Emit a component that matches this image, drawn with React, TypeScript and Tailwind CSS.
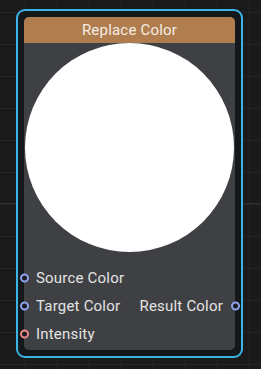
import * as React from 'react';

type Port = { label: string; tone: 'blue' | 'red' };

const inputs: Port[] = [
  { label: 'Source Color', tone: 'blue' },
  { label: 'Target Color', tone: 'blue' },
  { label: 'Intensity', tone: 'red' },
];

function Dot({ tone, side }: { tone: 'blue' | 'red'; side: 'left' | 'right' }) {
  return (
    <span
      className={
        'absolute top-1/2 -translate-y-1/2 w-[9px] h-[9px] rounded-full border-2 bg-[#1c1d24] ' +
        (tone === 'blue' ? 'border-[#8da2ec] ' : 'border-[#e88984] ') +
        (side === 'left' ? 'left-[-4.5px]' : 'right-[-4.5px]')
      }
    />
  );
}

export default function App() {
  return (
    <div
      className="w-[261px] h-[369px] overflow-hidden bg-[#1a1a1a] bg-[linear-gradient(to_bottom,#303030_1px,transparent_1px),linear-gradient(to_right,#242424_1px,transparent_1px),linear-gradient(to_bottom,#242424_1px,transparent_1px)] bg-[size:100%_320px,32px_32px,32px_32px] bg-[position:0_203px,25px_12px,25px_12px] pt-[9px] pl-[16px]"
      style={{ fontFamily: 'Roboto, "Noto Sans", sans-serif' }}
    >
      <div className="w-[227px] h-[349px] border-2 border-[#3ab4e6] rounded-[9px] bg-[#15181a] p-[6px]">
        <div className="h-[333px] rounded-[5px] bg-[#3f4043] flex flex-col">
          <div className="h-[26px] rounded-t-[5px] bg-[#b07d4e] flex items-center justify-center text-[15px] tracking-[0.2px] text-[#f4ede5] leading-none">
            Replace Color
          </div>
          <div className="w-[209px] h-[209px] rounded-full bg-white mx-auto" />
          <div className="pt-[12px] text-[15px] tracking-[0.2px] text-[#e4e4e4]">
            {inputs.map((p, i) => (
              <div key={p.label} className="relative h-[28px] flex items-center justify-between">
                <Dot tone={p.tone} side="left" />
                <span className="pl-[12px]">{p.label}</span>
                {i === 1 && (
                  <>
                    <span className="pr-[12px]">Result Color</span>
                    <Dot tone="blue" side="right" />
                  </>
                )}
              </div>
            ))}
          </div>
        </div>
      </div>
    </div>
  );
}
